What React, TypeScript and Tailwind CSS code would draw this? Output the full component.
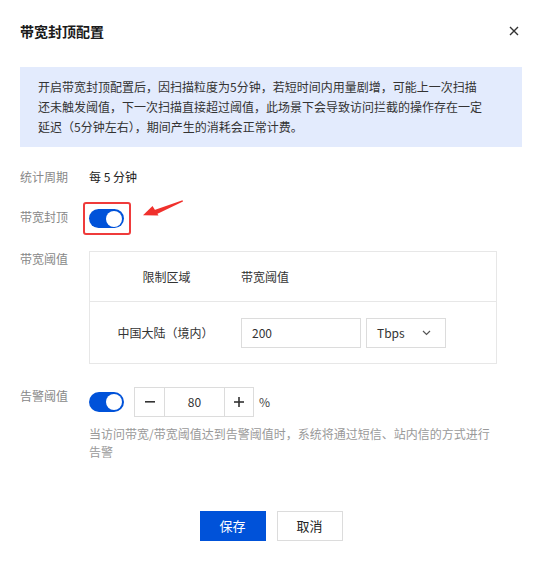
import React from "react";

function Toggle({ className = "" }: { className?: string }) {
  return (
    <div className={`relative w-[35px] h-[20px] rounded-full bg-[#0052d9] ${className}`}>
      <div className="absolute right-[2px] top-[2px] w-[16px] h-[16px] rounded-full bg-white" />
    </div>
  );
}

export default function App() {
  const font = { fontFamily: '"Noto Sans CJK SC", "Noto Sans", sans-serif' };
  return (
    <div className="w-[542px] h-[561px] bg-white px-5 overflow-hidden" style={font}>
      {/* header */}
      <div className="mt-[20px] h-[22px] flex items-center justify-between">
        <div className="text-[14px] leading-[22px] font-bold text-[#1a1a1a]">带宽封顶配置</div>
        <svg width="10" height="10" viewBox="0 0 10 10" className="mr-[3px]">
          <path d="M1 1 L9 9 M9 1 L1 9" stroke="#333" strokeWidth="1.4" />
        </svg>
      </div>

      {/* info box */}
      <div className="mt-[25px] h-[80px] bg-[#e3ebfd] pt-[10px] pl-[18px] text-[12px] leading-[20px] text-[#333]">
        <div className="whitespace-nowrap">开启带宽封顶配置后，因扫描粒度为5分钟，若短时间内用量剧增，可能上一次扫描</div>
        <div className="whitespace-nowrap">还未触发阈值，下一次扫描直接超过阈值，此场景下会导致访问拦截的操作存在一定</div>
        <div className="whitespace-nowrap">延迟（5分钟左右），期间产生的消耗会正常计费。</div>
      </div>

      {/* row 1 */}
      <div className="mt-[20px] flex h-5 text-[12px] leading-5">
        <div className="w-[69px] text-[#888]">统计周期</div>
        <div className="text-[#222]">每 5 分钟</div>
      </div>

      {/* row 2 */}
      <div className="mt-[20px] flex items-start h-5 text-[12px] leading-5">
        <div className="w-[69px] text-[#888]">带宽封顶</div>
        <div className="relative mt-[2px]">
          <Toggle className="!h-[19px]" />
          <div className="absolute left-[-6px] top-[-7px] w-[48px] h-[33px] border-2 border-[#ef3b3b] rounded-[3px]" />
          <svg
            className="absolute left-[50px] top-[-9px]"
            width="44"
            height="20"
            viewBox="0 0 44 20"
          >
            <polygon points="43.5,0.3 15.5,10 17.5,14.2 44,1.6" fill="#f0302c" />
            <polygon points="4,15.2 13.5,6 19.5,15.6" fill="#f0302c" />
          </svg>
        </div>
      </div>

      {/* row 3 */}
      <div className="mt-[22px] flex items-start text-[12px] leading-5">
        <div className="w-[69px] text-[#888]">带宽阈值</div>
        <div className="mt-[2px] w-[408px] border border-[#e7e7e7]">
          <div className="h-[50px] flex items-center border-b border-[#e7e7e7] text-[#333]">
            <div className="w-[151px] text-center pl-[2px]">限制区域</div>
            <div>带宽阈值</div>
          </div>
          <div className="h-[61px] flex items-center text-[#333]">
            <div className="w-[151px] text-center">中国大陆（境内）</div>
            <div className="w-[120px] h-[30px] border border-[#dcdcdc] flex items-center pl-[10px]">200</div>
            <div className="ml-[5px] w-[80px] h-[30px] border border-[#dcdcdc] flex items-center justify-between pl-[10px] pr-[14px]">
              <span>Tbps</span>
              <svg width="9" height="6" viewBox="0 0 9 6">
                <path d="M1 1 L4.5 4.5 L8 1" stroke="#555" strokeWidth="1.2" fill="none" />
              </svg>
            </div>
          </div>
        </div>
      </div>

      {/* row 4 */}
      <div className="mt-[22px] flex items-start text-[12px] leading-5">
        <div className="w-[69px] text-[#888]">告警阈值</div>
        <div className="flex flex-col">
          <div className="mt-[1px] flex items-center h-[30px]">
            <Toggle />
            <div className="ml-[10px] h-[30px] w-[120px] border border-[#dcdcdc] flex items-stretch text-[#333]">
              <div className="w-[30px] border-r border-[#dcdcdc] flex items-center justify-center">
                <svg width="10" height="2" viewBox="0 0 10 2">
                  <rect x="0" y="0" width="10" height="1.6" fill="#333" />
                </svg>
              </div>
              <div className="w-[59px] flex items-center justify-center">80</div>
              <div className="flex-1 border-l border-[#dcdcdc] flex items-center justify-center">
                <svg width="10" height="10" viewBox="0 0 10 10">
                  <rect x="0" y="4.2" width="10" height="1.6" fill="#333" />
                  <rect x="4.2" y="0" width="1.6" height="10" fill="#333" />
                </svg>
              </div>
            </div>
            <div className="ml-[5px] text-[#444]">%</div>
          </div>
          <div className="mt-[8px] text-[12px] leading-[18px] text-[#999]">
            <div className="whitespace-nowrap">当访问带宽/带宽阈值达到告警阈值时，系统将通过短信、站内信的方式进行</div>
            <div>告警</div>
          </div>
        </div>
      </div>

      {/* buttons */}
      <div className="mt-[50px] flex justify-center gap-[11px] text-[13px]">
        <div className="w-[66px] h-[30px] bg-[#0052d9] text-white flex items-center justify-center">保存</div>
        <div className="w-[66px] h-[30px] border border-[#dcdcdc] text-[#222] flex items-center justify-center">取消</div>
      </div>
    </div>
  );
}
